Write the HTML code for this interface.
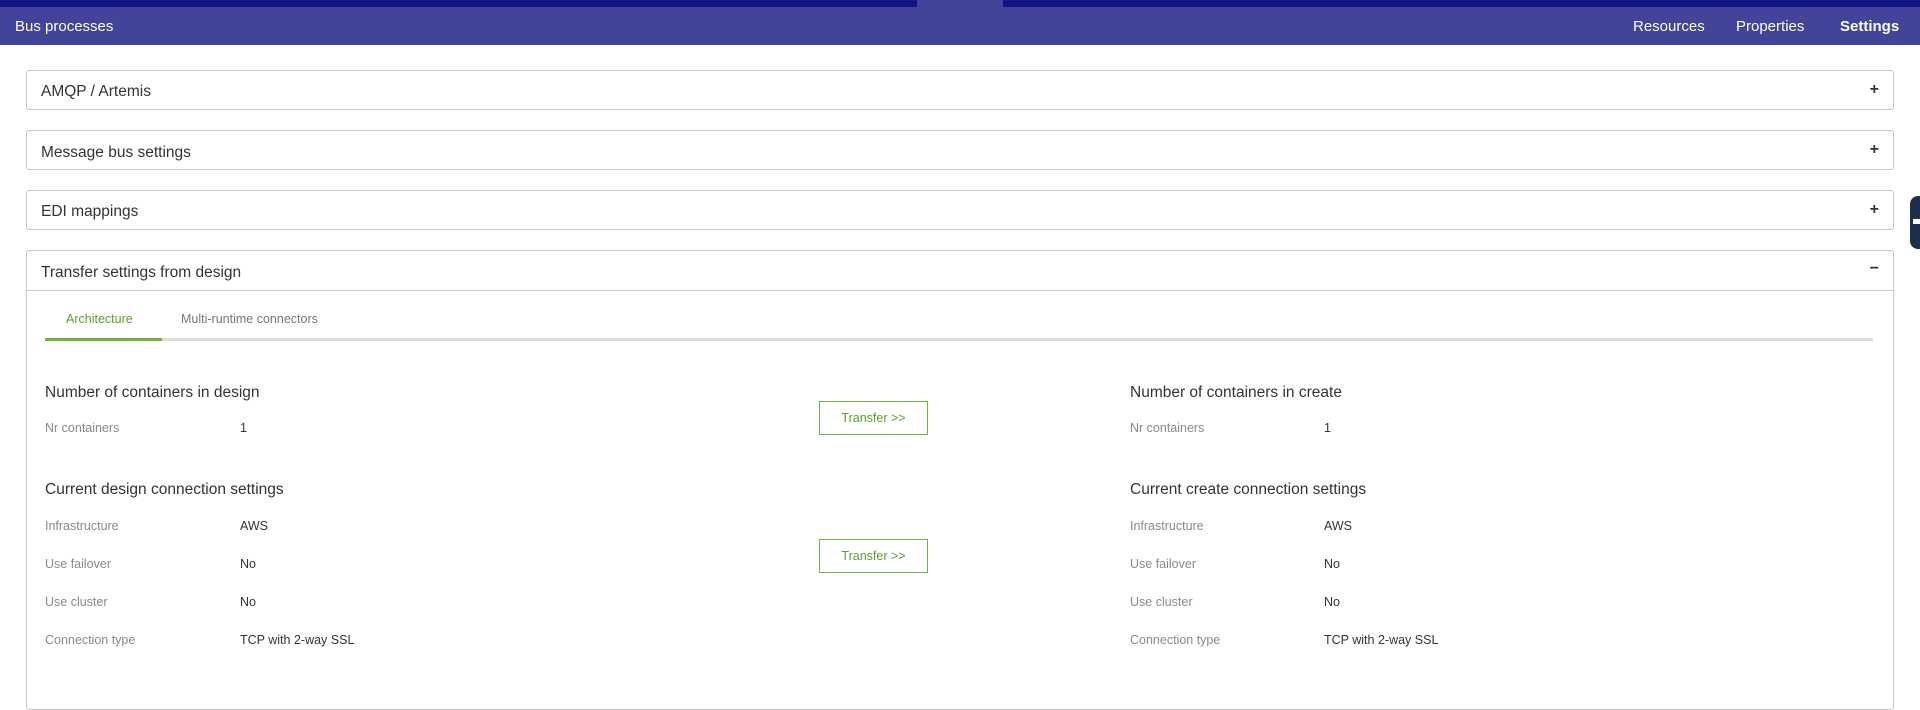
<!DOCTYPE html>
<html><head><style>
*{margin:0;padding:0;box-sizing:border-box}
body{width:1920px;height:690px;overflow:hidden;background:#fff;font-family:"Liberation Sans",sans-serif;color:#333;position:relative}
.a{position:absolute;white-space:nowrap}
.hdr{position:absolute;left:0;top:0;width:1920px;height:45px;background:#42449a}
.top{position:absolute;top:0;height:7px;background:#11157f}
.nav{color:#fff;font-size:15px;top:18px}
.panel{position:absolute;left:26px;width:1868px;border:1px solid #c8c8c8;border-radius:3px;background:#fff}
.pt{position:absolute;left:14px;font-size:15.5px;color:#333}
.pm{position:absolute;right:14px;font-size:16px;font-weight:bold;color:#333}
.h{font-size:15.5px;color:#333}
.l{font-size:12.5px;color:#8a8a8a}
.v{font-size:12.5px;color:#333}
.btn{position:absolute;width:109px;height:34px;border:1px solid #6cb33f;color:#5aa02c;font-size:12.5px;text-align:center;line-height:32px}
</style></head><body>
<div class="hdr"></div>
<div class="top" style="left:0;width:917px"></div>
<div class="top" style="left:1003px;width:917px"></div>
<div class="a nav" style="left:15px">Bus processes</div>
<div class="a nav" style="left:1633px">Resources</div>
<div class="a nav" style="left:1736px">Properties</div>
<div class="a nav" style="left:1840px;font-weight:bold">Settings</div>

<div class="panel" style="top:70px;height:40px"><div class="pt" style="top:12px">AMQP / Artemis</div><div class="pm" style="top:10px">+</div></div>
<div class="panel" style="top:130px;height:40px"><div class="pt" style="top:13px">Message bus settings</div><div class="pm" style="top:10px">+</div></div>
<div class="panel" style="top:190px;height:40px"><div class="pt" style="top:12px">EDI mappings</div><div class="pm" style="top:10px">+</div></div>
<div class="panel" style="top:250px;height:460px">
<div class="pt" style="top:13px">Transfer settings from design</div><div class="pm" style="top:9px">−</div>
<div style="position:absolute;left:0;right:0;top:39px;border-top:1px solid #c8c8c8"></div>
</div>
<div class="a" style="left:66px;top:312px;font-size:12.5px;color:#5aa02c">Architecture</div>
<div class="a" style="left:181px;top:312px;font-size:12.5px;color:#777">Multi-runtime connectors</div>
<div class="a" style="left:45px;top:338px;width:1828px;height:3px;background:#ddd"></div>
<div class="a" style="left:45px;top:338px;width:117px;height:3px;background:#6cb33f"></div>

<div class="a h" style="left:45px;top:384px">Number of containers in design</div>
<div class="a l" style="left:45px;top:421px">Nr containers</div><div class="a v" style="left:240px;top:421px">1</div>
<div class="a h" style="left:45px;top:481px">Current design connection settings</div>
<div class="a l" style="left:45px;top:519px">Infrastructure</div><div class="a v" style="left:240px;top:519px">AWS</div>
<div class="a l" style="left:45px;top:557px">Use failover</div><div class="a v" style="left:240px;top:557px">No</div>
<div class="a l" style="left:45px;top:595px">Use cluster</div><div class="a v" style="left:240px;top:595px">No</div>
<div class="a l" style="left:45px;top:633px">Connection type</div><div class="a v" style="left:240px;top:633px">TCP with 2-way SSL</div>

<div class="btn" style="left:819px;top:401px">Transfer &gt;&gt;</div>
<div class="btn" style="left:819px;top:539px">Transfer &gt;&gt;</div>

<div class="a h" style="left:1130px;top:384px">Number of containers in create</div>
<div class="a l" style="left:1130px;top:421px">Nr containers</div><div class="a v" style="left:1324px;top:421px">1</div>
<div class="a h" style="left:1130px;top:481px">Current create connection settings</div>
<div class="a l" style="left:1130px;top:519px">Infrastructure</div><div class="a v" style="left:1324px;top:519px">AWS</div>
<div class="a l" style="left:1130px;top:557px">Use failover</div><div class="a v" style="left:1324px;top:557px">No</div>
<div class="a l" style="left:1130px;top:595px">Use cluster</div><div class="a v" style="left:1324px;top:595px">No</div>
<div class="a l" style="left:1130px;top:633px">Connection type</div><div class="a v" style="left:1324px;top:633px">TCP with 2-way SSL</div>

<div class="a" style="left:1910px;top:196px;width:20px;height:53px;background:#1e2f4c;border-radius:8px"></div>
<div class="a" style="left:1913px;top:219px;width:7px;height:5px;background:#fff"></div>
</body></html>
